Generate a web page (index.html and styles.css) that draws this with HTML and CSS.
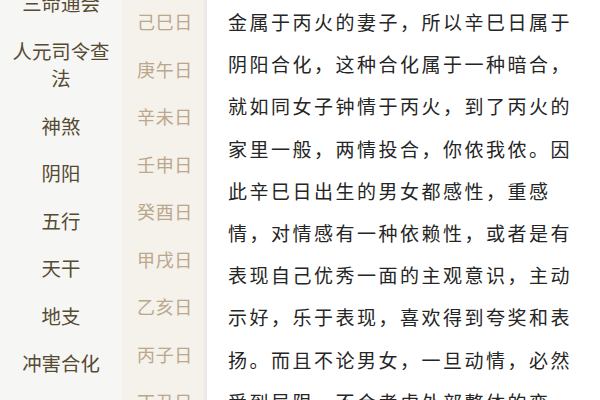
FILE: index.html
```html
<!DOCTYPE html>
<html lang="zh-CN">
<head>
<meta charset="utf-8">
<link rel="stylesheet" href="styles.css">
</head>
<body>
<div class="page">
  <nav class="cats">
    <div class="cat">三命通会</div>
    <div class="cat">人元司令查<br>法</div>
    <div class="cat">神煞</div>
    <div class="cat">阴阳</div>
    <div class="cat">五行</div>
    <div class="cat">天干</div>
    <div class="cat">地支</div>
    <div class="cat">冲害合化</div>
    <div class="cat">纳音</div>
  </nav>
  <div class="days">
    <div class="day">己巳日</div>
    <div class="day">庚午日</div>
    <div class="day">辛未日</div>
    <div class="day">壬申日</div>
    <div class="day">癸酉日</div>
    <div class="day">甲戌日</div>
    <div class="day">乙亥日</div>
    <div class="day">丙子日</div>
    <div class="day">丁丑日</div>
  </div>
  <main class="content">
    <p class="text">金属于丙火的妻子，所以辛巳日属于阴阳合化，这种合化属于一种暗合，就如同女子钟情于丙火，到了丙火的家里一般，两情投合，你侬我侬。因此辛巳日出生的男女都感性，重感情，对情感有一种依赖性，或者是有表现自己优秀一面的主观意识，主动示好，乐于表现，喜欢得到夸奖和表扬。而且不论男女，一旦动情，必然受到局限，不会考虑外部整体的变化。</p>
  </main>
</div>
</body>
</html>
```
FILE: styles.css
```css
html, body {
  margin: 0;
  padding: 0;
  width: 600px;
  height: 400px;
  overflow: hidden;
  background: #ffffff;
}
.page {
  display: flex;
  height: 400px;
  overflow: hidden;
  font-family: "Noto Sans CJK SC", "Noto Sans", sans-serif;
}
.cats {
  width: 122px;
  flex: none;
  background: #f6f6f4;
  margin-top: -21px;
  padding-top: 0;
}
.cat {
  padding: 10px 0;
  line-height: 27.5px;
  font-size: 19.4px;
  color: #574a33;
  text-align: center;
}
.days {
  width: 82px;
  flex: none;
  background: #f5f1eb;
  border-right: 3px solid #ebe9e7;
  margin-top: -2px;
}
.day {
  height: 47.5px;
  line-height: 47.5px;
  font-size: 18px;
  letter-spacing: 0.7px;
  color: #bba78c;
  text-align: center;
  padding-left: 4px;
}
.content {
  flex: 1;
  padding: 1px 0 0 21px;
}
.text {
  margin: 0;
  width: 346px;
  font-size: 19px;
  letter-spacing: 2.5px;
  line-height: 42.2px;
  color: #252525;
}
```
